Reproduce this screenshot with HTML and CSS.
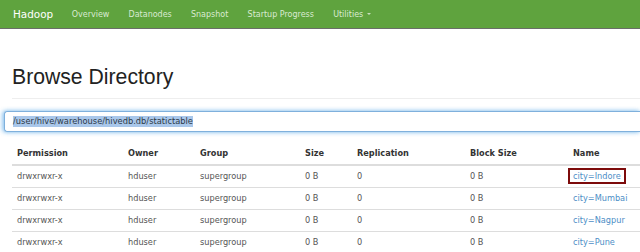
FILE: index.html
```html
<!DOCTYPE html>
<html lang="en">
<head>
    <meta charset="UTF-8">
    <title>Browsing HDFS</title>
    <link rel="stylesheet" href="styles.css">
</head>
<body>
    <nav class="navbar">
        <a class="brand" href="#">Hadoop</a>
        <ul class="nav">
            <li><a href="#">Overview</a></li>
            <li><a href="#">Datanodes</a></li>
            <li><a href="#">Snapshot</a></li>
            <li><a href="#">Startup Progress</a></li>
            <li><a href="#">Utilities <span class="caret"></span></a></li>
        </ul>
    </nav>

    <div class="container">
        <div class="page-header">
            <h1>Browse Directory</h1>
        </div>

        <div class="path-box">
            <span class="path-text">/user/hive/warehouse/hivedb.db/statictable</span>
        </div>

        <table class="listing">
            <thead>
                <tr>
                    <th>Permission</th>
                    <th>Owner</th>
                    <th>Group</th>
                    <th>Size</th>
                    <th>Replication</th>
                    <th>Block Size</th>
                    <th>Name</th>
                </tr>
            </thead>
            <tbody>
                <tr>
                    <td>drwxrwxr-x</td><td>hduser</td><td>supergroup</td><td>0 B</td><td>0</td><td>0 B</td>
                    <td><a href="#" class="marked">city=Indore</a></td>
                </tr>
                <tr>
                    <td>drwxrwxr-x</td><td>hduser</td><td>supergroup</td><td>0 B</td><td>0</td><td>0 B</td>
                    <td><a href="#">city=Mumbai</a></td>
                </tr>
                <tr>
                    <td>drwxrwxr-x</td><td>hduser</td><td>supergroup</td><td>0 B</td><td>0</td><td>0 B</td>
                    <td><a href="#">city=Nagpur</a></td>
                </tr>
                <tr>
                    <td>drwxrwxr-x</td><td>hduser</td><td>supergroup</td><td>0 B</td><td>0</td><td>0 B</td>
                    <td><a href="#">city=Pune</a></td>
                </tr>
            </tbody>
        </table>
    </div>
</body>
</html>
```

FILE: styles.css
```css
html, body {
    overflow: hidden;
}

body {
    margin: 0;
    background: #fff;
    font-family: 'DejaVu Sans', sans-serif;
    color: #555;
}

.navbar {
    display: flex;
    align-items: center;
    height: 28px;
    background: #5fa33e;
    border-bottom: 1px solid #6a6f68;
}

.brand {
    padding: 0 9px 0 13px;
    font-size: 10.4px;
    color: #fff;
    text-decoration: none;
}

.nav {
    display: flex;
    margin: 0;
    padding: 0;
    list-style: none;
}

.nav a {
    display: block;
    padding: 0 9.6px;
    font-size: 8px;
    color: #d9ead1;
    text-decoration: none;
}

.caret {
    display: inline-block;
    width: 0;
    height: 0;
    margin-left: 1px;
    vertical-align: middle;
    border-top: 2px solid #c9dfbe;
    border-left: 2px solid transparent;
    border-right: 2px solid transparent;
}

.container {
    padding: 0 0 0 12px;
}

.page-header {
    border-bottom: 1px solid #eee;
    padding-bottom: 9px;
    margin-top: 36px;
}

.page-header h1 {
    margin: 0;
    font-family: 'Liberation Sans', Arial, sans-serif;
    font-weight: normal;
    font-size: 21.2px;
    line-height: 24px;
    color: #222;
}

.path-box {
    margin: 12px 0 0 -8px;
    height: 19px;
    padding: 0 8px;
    display: flex;
    align-items: center;
    border: 1px solid #7fb0dc;
    border-right: none;
    border-radius: 3px 0 0 3px;
    box-shadow: -2px 0 4px rgba(102, 175, 233, 0.5), 0 0 4px rgba(102, 175, 233, 0.6);
}

.path-text {
    font-size: 8.3px;
    line-height: 11px;
    color: #2d3a48;
    background: #a9c7ea;
}

.listing {
    width: 100%;
    margin-top: 11px;
    border-collapse: collapse;
    table-layout: fixed;
    font-size: 8.2px;
}

.listing th,
.listing td {
    padding: 5px;
    line-height: 11px;
    text-align: left;
    white-space: nowrap;
}

.listing th {
    font-weight: bold;
    color: #333;
    border-bottom: 2px solid #ddd;
}

.listing td {
    border-bottom: 1px solid #ddd;
}

.listing tbody tr:last-child td {
    border-bottom: none;
}

.listing th:nth-child(1) { width: 101px; }
.listing th:nth-child(2) { width: 62px; }
.listing th:nth-child(3) { width: 95px; }
.listing th:nth-child(4) { width: 42px; }
.listing th:nth-child(5) { width: 103px; }
.listing th:nth-child(6) { width: 93px; }

.listing a {
    color: #4d8ec6;
    text-decoration: none;
}

.listing a.marked {
    margin-left: -5px;
    padding: 1px 3px;
    border: 2px solid #7d0b0b;
}
```
